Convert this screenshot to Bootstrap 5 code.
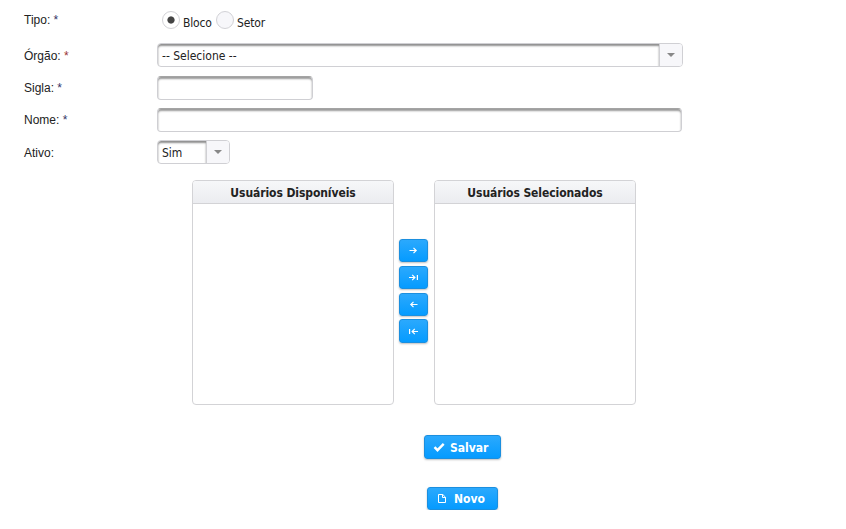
<!DOCTYPE html>
<html lang="pt-BR">
<head>
<meta charset="utf-8">
<meta name="viewport" content="width=device-width, initial-scale=1">
<title>Cadastro</title>
<link href="https://cdn.jsdelivr.net/npm/bootstrap@5.3.0/dist/css/bootstrap.min.css" rel="stylesheet">
<script src="https://cdn.jsdelivr.net/npm/bootstrap@5.3.0/dist/js/bootstrap.bundle.min.js" defer></script>
<style>
body{font:12px/16px "Liberation Sans",Arial,sans-serif;color:#222;background:#fff;overflow:hidden}
.page-form{width:846px;padding-top:8px}
.field-row{height:32px;padding-left:24px}
.field-row.row-tipo{height:35px;padding-bottom:11px}
.field-row.row-orgao{height:33px}
.field-label{width:133px;flex:none;white-space:pre;padding-top:4px}
.row-tipo .field-label{padding-top:0}
.row-orgao .field-label,.row-ativo .field-label{padding-top:5px}
.ui-font{font-family:"DejaVu Sans Condensed","DejaVu Sans",sans-serif;font-stretch:condensed}
.req-blue{color:#336}
.req-red{color:#933}
.field-box{height:24px;border:1px solid #cfcfd3;border-top-color:#a4a4a4;border-radius:4px;box-shadow:inset 0 2px 2px #9a9a9a;padding:0 4px;font-size:12px;color:#222;background:#fff}
.pick-select{height:24px;border:1px solid #d0d0d4;border-radius:4px;overflow:hidden;background:#fff}
.pick-value{box-shadow:inset 0 2px 2px #8f8f8f;padding:2px 0 0 4px;border-radius:3px 0 0 0}
.pick-arrow{width:23px;background:#f7f7fa;border-left:1px solid #d0d0d4}
.w-orgao{width:526px}.w-sigla{width:156px}.w-nome{width:525px}.w-ativo{width:73px}
.radio-group{padding-left:5px}
.radio-dot{appearance:none;flex:none;width:18px;height:18px;margin:0;border:1px solid #d2d2d6;border-radius:50%;background:#f7f7fa}
.radio-dot:checked{background:radial-gradient(circle,#444 0 3.2px,#fff 4px)}
.radio-text{flex:none;padding:5px 0 0 3px;letter-spacing:-.15px}
.radio-text.text-first{width:36px}
.transfer{margin-left:192px;margin-top:8px;height:225px}
.pick-list{width:202px;border:1px solid #d3d3d6;border-radius:4px;overflow:hidden}
.pick-head{height:23px;line-height:24px;border-bottom:1px solid #d3d3d6;background:linear-gradient(#f6f7f9,#ebecf0);font-weight:700;font-size:12px;letter-spacing:-.08px}
.move-col{width:40px;padding-right:1px;padding-top:59px;gap:3.4px}
.btn-sky{--bs-btn-color:#fff;--bs-btn-hover-color:#fff;--bs-btn-border-radius:3px;--bs-btn-padding-x:0;--bs-btn-padding-y:0;--bs-btn-font-size:12px;--bs-btn-line-height:16px;--bs-btn-font-weight:700;border:1px solid #1b8fdf;background:linear-gradient(#2ba9fd,#059bff);box-shadow:0 1px 2px rgba(0,0,0,.25)}
.btn-move{width:29px;height:23.4px}
.actions{margin-left:424px;margin-top:30px}
.btn-save{width:77px;height:24px;padding-left:8px;gap:5px}
.btn-new{width:71px;height:23px;margin:28px 0 0 3px;padding-left:10px;gap:8px}
.btn-save span,.btn-new span{padding-top:1px}
svg{display:block;flex:none}
</style>
</head>
<body>
<main class="page-form">
<form>
  <div class="field-row row-tipo d-flex align-items-center">
    <span class="field-label">Tipo: <span class="req-blue">*</span></span>
    <div class="radio-group d-flex align-items-center ui-font">
      <input class="radio-dot" type="radio" name="tipo" id="bloco" checked>
      <label class="radio-text text-first" for="bloco">Bloco</label>
      <input class="radio-dot" type="radio" name="tipo" id="setor">
      <label class="radio-text" for="setor">Setor</label>
    </div>
  </div>
  <div class="field-row row-orgao d-flex align-items-start">
    <span class="field-label">Órgão: <span class="req-red">*</span></span>
    <div class="pick-select w-orgao d-flex ui-font">
      <span class="pick-value flex-grow-1 d-flex align-items-center">-- Selecione --</span>
      <span class="pick-arrow d-flex align-items-center justify-content-center"><svg width="8" height="4" viewBox="0 0 8 4"><path d="M0 0h8L4 4z" fill="#888"/></svg></span>
    </div>
  </div>
  <div class="field-row d-flex align-items-start">
    <label class="field-label" for="sigla">Sigla: <span class="req-blue">*</span></label>
    <input id="sigla" class="field-box w-sigla" type="text">
  </div>
  <div class="field-row d-flex align-items-start">
    <label class="field-label" for="nome">Nome: <span class="req-blue">*</span></label>
    <input id="nome" class="field-box w-nome" type="text">
  </div>
  <div class="field-row row-ativo d-flex align-items-start">
    <span class="field-label">Ativo:</span>
    <div class="pick-select w-ativo d-flex ui-font">
      <span class="pick-value flex-grow-1 d-flex align-items-center">Sim</span>
      <span class="pick-arrow d-flex align-items-center justify-content-center"><svg width="8" height="4" viewBox="0 0 8 4"><path d="M0 0h8L4 4z" fill="#888"/></svg></span>
    </div>
  </div>
  <div class="transfer d-flex">
    <section class="pick-list"><div class="pick-head text-center ui-font">Usuários Disponíveis</div></section>
    <div class="move-col d-flex flex-column align-items-center">
      <button type="button" class="btn btn-sky btn-move d-flex align-items-center justify-content-center" aria-label="Adicionar"><svg width="9" height="7" viewBox="0 0 9 7" fill="none" stroke="#fff" stroke-width="1.2"><path d="M.5 3.500h7M4.500.8l2.700 2.700-2.700 2.700"/></svg></button>
      <button type="button" class="btn btn-sky btn-move d-flex align-items-center justify-content-center" aria-label="Adicionar todos"><svg width="9" height="7" viewBox="0 0 9 7" fill="none" stroke="#fff" stroke-width="1.2"><path d="M0 3.500h6M3.200.8l2.700 2.700-2.700 2.700M8.400 1v5"/></svg></button>
      <button type="button" class="btn btn-sky btn-move d-flex align-items-center justify-content-center" aria-label="Remover"><svg width="9" height="7" viewBox="0 0 9 7" fill="none" stroke="#fff" stroke-width="1.2"><path d="M8.500 3.500h-7M4.500.8L1.800 3.500l2.700 2.700"/></svg></button>
      <button type="button" class="btn btn-sky btn-move d-flex align-items-center justify-content-center" aria-label="Remover todos"><svg width="9" height="7" viewBox="0 0 9 7" fill="none" stroke="#fff" stroke-width="1.2"><path d="M9 3.500H3M5.800.8L3.100 3.500l2.700 2.700M.6 1v5"/></svg></button>
    </div>
    <section class="pick-list"><div class="pick-head text-center ui-font">Usuários Selecionados</div></section>
  </div>
  <div class="actions">
    <button type="submit" class="btn btn-sky btn-save d-flex align-items-center ui-font"><svg width="12" height="10" viewBox="0 0 12 10" fill="none" stroke="#fff" stroke-width="2.4"><path d="M1.500 5.200l3 3 6.200-6.400"/></svg><span>Salvar</span></button>
    <button type="button" class="btn btn-sky btn-new d-flex align-items-center ui-font"><svg width="8" height="9" viewBox="0 0 8 9" fill="none" stroke="#fff"><path d="M.5.5h4.300l2.700 2.700v5.300h-7zM4.500.5v3h3"/></svg><span>Novo</span></button>
  </div>
</form>
</main>
</body>
</html>
